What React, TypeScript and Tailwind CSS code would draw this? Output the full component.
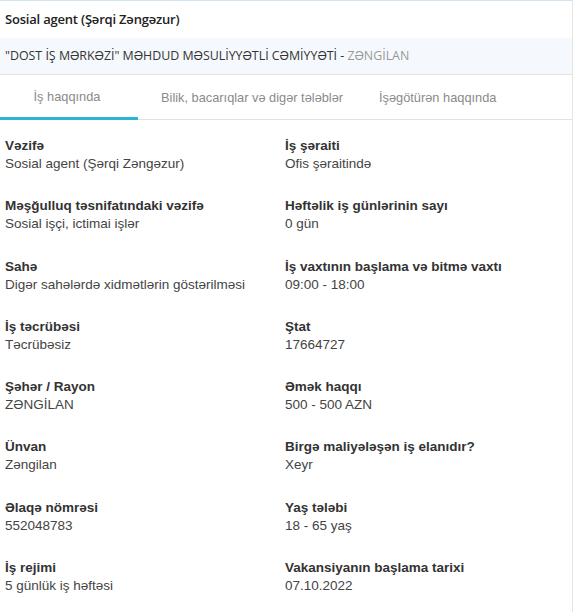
import React from 'react';

type Field = { label: string; value: string };

const leftFields: Field[] = [
  { label: 'Vəzifə', value: 'Sosial agent (Şərqi Zəngəzur)' },
  { label: 'Məşğulluq təsnifatındaki vəzifə', value: 'Sosial işçi, ictimai işlər' },
  { label: 'Sahə', value: 'Digər sahələrdə xidmətlərin göstərilməsi' },
  { label: 'İş təcrübəsi', value: 'Təcrübəsiz' },
  { label: 'Şəhər / Rayon', value: 'ZƏNGİLAN' },
  { label: 'Ünvan', value: 'Zəngilan' },
  { label: 'Əlaqə nömrəsi', value: '552048783' },
  { label: 'İş rejimi', value: '5 günlük iş həftəsi' },
];

const rightFields: Field[] = [
  { label: 'İş şəraiti', value: 'Ofis şəraitində' },
  { label: 'Həftəlik iş günlərinin sayı', value: '0 gün' },
  { label: 'İş vaxtının başlama və bitmə vaxtı', value: '09:00 - 18:00' },
  { label: 'Ştat', value: '17664727' },
  { label: 'Əmək haqqı', value: '500 - 500 AZN' },
  { label: 'Birgə maliyələşən iş elanıdır?', value: 'Xeyr' },
  { label: 'Yaş tələbi', value: '18 - 65 yaş' },
  { label: 'Vakansiyanın başlama tarixi', value: '07.10.2022' },
];

const InfoItem: React.FC<{ field: Field }> = ({ field }) => (
  <div className="h-[60.3px] font-['Liberation_Sans',Arial,sans-serif] text-[13.5px] leading-[19px]">
    <p className="font-bold text-[#333]">{field.label}</p>
    <p className="text-[#444] -mt-[1px]">{field.value}</p>
  </div>
);

export default function App() {
  return (
    <div className="w-[574px] h-[612px] bg-white overflow-hidden">
      <div className="w-[573px] border-t border-r border-[#d4e4f0] border-r-[#e4e4e4]">
        <div className="h-[37px] flex items-center px-[5px] font-['Open_Sans',sans-serif] text-[13px] font-semibold tracking-[-0.2px] text-[#222]">
          Sosial agent (Şərqi Zəngəzur)
        </div>
        <div className="h-[37px] flex items-center px-[5px] bg-[#f5f9fd] border-b border-[#e2e2e2] font-['Open_Sans',sans-serif] text-[12.4px] text-[#333]">
          "DOST İŞ MƏRKƏZİ" MƏHDUD MƏSULİYYƏTLİ CƏMİYYƏTİ -&nbsp;
          <span className="text-[#999]">ZƏNGİLAN</span>
        </div>
        <div className="flex h-[45px] border-b border-[#e2e2e2] font-['Liberation_Sans',Arial,sans-serif] text-[12.8px] text-[#8a8a8a]">
          <div className="w-[138px] flex items-center justify-center border-b-[3px] border-[#2bb5d5] mb-[-1px] pt-[2px] pr-[4px]">
            İş haqqında
          </div>
          <div className="w-[241px] flex items-center pl-[23px] pt-[2px]">Bilik, bacarıqlar və digər tələblər</div>
          <div className="flex items-center pt-[2px]">İşəgötürən haqqında</div>
        </div>
        <div className="grid grid-cols-[280px_1fr] pl-[5px] pt-[16px]">
          <div>
            {leftFields.map((f) => (
              <InfoItem key={f.label} field={f} />
            ))}
          </div>
          <div>
            {rightFields.map((f) => (
              <InfoItem key={f.label} field={f} />
            ))}
          </div>
        </div>
      </div>
    </div>
  );
}
